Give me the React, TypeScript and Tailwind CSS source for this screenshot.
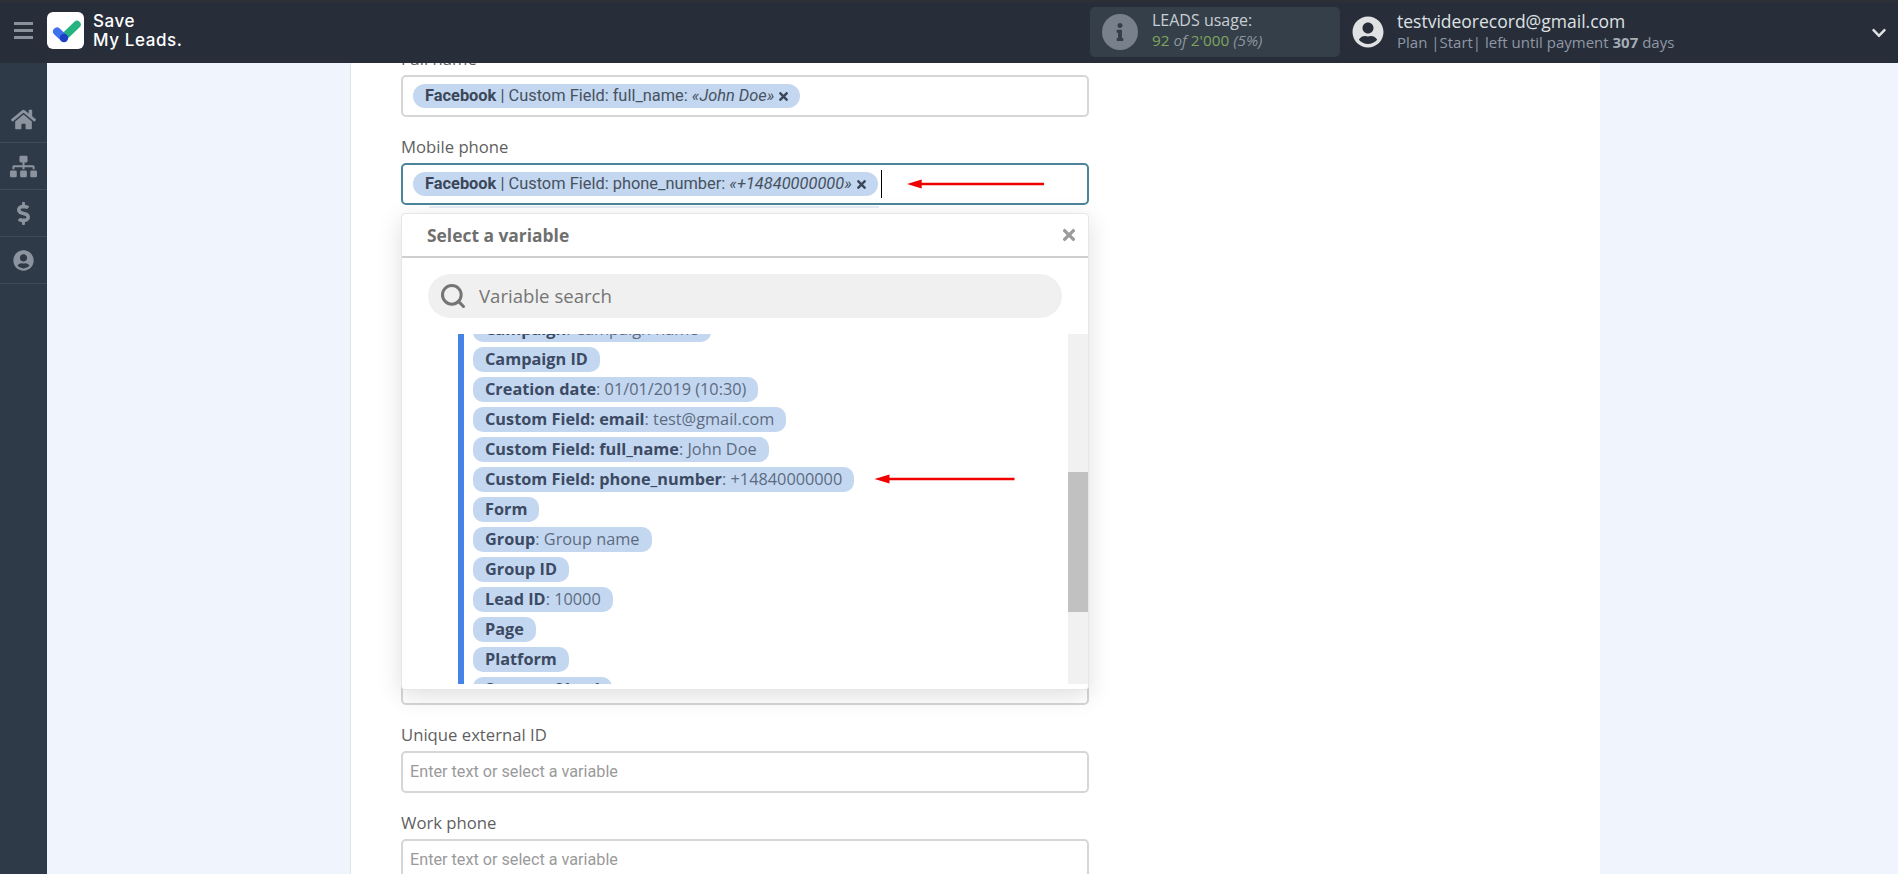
import React from "react";
import { FaHome, FaSitemap, FaDollarSign, FaUserCircle, FaInfo, FaTimes, FaChevronDown } from "react-icons/fa";
import { Search } from "lucide-react";

const openSans = "font-['Open_Sans','Liberation_Sans',sans-serif]";
const roboto = "font-['Roboto','Liberation_Sans',sans-serif]";

function TagChip({ field, value }: { field: string; value: string }) {
  return (
    <span className={`${roboto} inline-flex items-center h-[24px] rounded-[12px] bg-[#c3d7f0] pl-[12px] pr-[10px] text-[16.4px] text-[#47525f] whitespace-nowrap`}>
      <b className="font-bold text-[#3b4759]">Facebook</b>
      <span>&nbsp;| Custom Field: {field}:&nbsp;</span>
      <i>«{value}»</i>
      <FaTimes className="ml-[3px] w-[13px] h-[13px] text-[#3b4759]" />
    </span>
  );
}

function Label({ children }: { children: React.ReactNode }) {
  return <div className={`${openSans} h-[20px] leading-[20px] text-[16.7px] text-[#5f5f5f] mb-[6px]`}>{children}</div>;
}

function PlainInput() {
  return (
    <div className={`${roboto} h-[42px] border-2 border-[#d6d6d6] rounded-[5px] bg-white flex items-center pl-[7px] text-[16.2px] text-[#9a9a9a]`}>
      Enter text or select a variable
    </div>
  );
}

const vars: [string, string?][] = [
  ["Campaign", "Campaign name"],
  ["Campaign ID"],
  ["Creation date", "01/01/2019 (10:30)"],
  ["Custom Field: email", "test@gmail.com"],
  ["Custom Field: full_name", "John Doe"],
  ["Custom Field: phone_number", "+14840000000"],
  ["Form"],
  ["Group", "Group name"],
  ["Group ID"],
  ["Lead ID", "10000"],
  ["Page"],
  ["Platform"],
  ["Source of lead"],
];

function RedArrow({ className }: { className: string }) {
  return (
    <svg className={className} viewBox="0 0 140 10" fill="none">
      <path d="M14 5H140" stroke="#f00000" strokeWidth="2.6" />
      <path d="M0 5L15 0.5V9.5Z" fill="#f00000" />
    </svg>
  );
}

function Dropdown() {
  return (
    <div className="absolute left-0 right-0 top-[76px] h-[477px] z-10 bg-white rounded-[4px] border border-[#e6e6e6] shadow-[0_6px_24px_rgba(0,0,0,0.13)] flex flex-col">
      <div className="h-[44px] shrink-0 border-b-2 border-[#cfcfcf] flex items-center justify-between pl-[25px] pr-[10px]">
        <span className={`${openSans} text-[17.4px] font-bold text-[#6f6f6f]`}>Select a variable</span>
        <FaTimes className="w-[18px] h-[18px] text-[#9b9b9b]" />
      </div>
      <div className="px-[26px] pt-[16px] pb-[16px] shrink-0">
        <div className="h-[44px] rounded-full bg-[#f0f0f0] flex items-center pl-[11px]">
          <Search className="w-[28px] h-[28px] text-[#757575]" strokeWidth={2.6} />
          <span className={`${openSans} ml-[12px] text-[18.6px] text-[#757575]`}>Variable search</span>
        </div>
      </div>
      <div className="relative flex-1 min-h-0 mb-[5px] overflow-hidden">
        <div className="ml-[56px] w-[6px] h-full bg-[#4583e6] absolute left-0 top-0" />
        <div className="absolute right-0 top-0 bottom-0 w-[20px] bg-[#f1f1f1]">
          <div className="mt-[138px] h-[140px] bg-[#c1c1c1]" />
        </div>
        <div className="pl-[71px] -mt-[17px] flex flex-col items-start gap-[5px]">
          {vars.map(([k, v]) => (
            <div key={k} className={`${openSans} h-[25px] shrink-0 rounded-[10px] bg-[#c3d7f0] px-[12px] flex items-center text-[16.3px] text-[#5d6b80] whitespace-nowrap`}>
              <b className="font-bold text-[#3c4a63]">{k}</b>
              {v ? <span className="font-normal">: {v}</span> : null}
            </div>
          ))}
        </div>
      </div>
    </div>
  );
}

export default function App() {
  return (
    <div className="h-screen w-full overflow-hidden flex flex-col bg-white">
      <header className="h-[63px] shrink-0 bg-[#272e3a] border-t-2 border-[#2d3036] flex items-center text-white">
        <div className="w-[47px] flex flex-col items-center gap-[4px] -mt-[4px] shrink-0">
          <span className="block w-[19px] h-[3px] bg-[#8a919b]" />
          <span className="block w-[19px] h-[3px] bg-[#8a919b]" />
          <span className="block w-[19px] h-[3px] bg-[#8a919b]" />
        </div>
        <div className="w-[37px] h-[37px] -mt-[4px] rounded-[6px] bg-white shrink-0">
          <svg viewBox="0 0 37 37" className="w-full h-full" fill="none">
            <path d="M16.5 25.5L30 12.5" stroke="#25b37f" strokeWidth="7.5" strokeLinecap="round" />
            <path d="M10 19.5L16.5 25.5" stroke="#3f72ea" strokeWidth="8" strokeLinecap="round" />
            <circle cx="17" cy="26" r="4.2" fill="#1d3fc4" />
          </svg>
        </div>
        <div className="ml-[9px] -mt-[4px] font-['Inter',sans-serif] font-medium text-[17px] leading-[19px] tracking-[0.6px] shrink-0">
          <div>Save</div>
          <div>My Leads.</div>
        </div>
        <div className="ml-auto flex items-center h-full">
          <div className="w-[250px] h-[50px] -mt-[2px] rounded-[5px] bg-[#343f4a] flex items-center pl-[12px]">
            <div className="w-[36px] h-[36px] rounded-full bg-[#78818b] flex items-center justify-center">
              <FaInfo className="w-[18px] h-[18px] text-[#343f4a]" />
            </div>
            <div className={`${openSans} ml-[14px] -mt-[3px] leading-[20px]`}>
              <div className="text-[16px] text-[#c9ced3]">LEADS usage:</div>
              <div className="text-[15.3px] text-[#7fa55d]">
                92 <i className="text-[#8c959e]">of</i> 2'000 <i className="text-[#8c959e]">(5%)</i>
              </div>
            </div>
          </div>
          <FaUserCircle className="ml-[12px] w-[32px] h-[32px] -mt-[2px] text-[#dfe1e3]" />
          <div className={`${openSans} ml-[13px] w-[474px] -mt-[2px]`}>
            <div className="text-[17.5px] leading-[23px] text-[#dfe1e3] -mt-[1px]">testvideorecord@gmail.com</div>
            <div className="text-[15px] leading-[19px] text-[#8f98a3]">
              Plan |Start| left until payment <b className="font-bold text-[#a5adb5]">307</b> days
            </div>
          </div>
          <FaChevronDown className="w-[16px] h-[16px] text-[#dfe1e3] mr-[11px]" />
        </div>
      </header>
      <div className="flex flex-1 min-h-0">
        <aside className="w-[47px] shrink-0 bg-[#2f3a48] pt-[33px] text-[#8b949e]">
          <div className="h-[47px] border-b border-[#414c5a] flex items-center justify-center"><FaHome className="w-[25px] h-[25px]" /></div>
          <div className="h-[47px] border-b border-[#414c5a] flex items-center justify-center"><FaSitemap className="w-[27px] h-[27px]" /></div>
          <div className="h-[47px] border-b border-[#414c5a] flex items-center justify-center"><FaDollarSign className="w-[23px] h-[23px]" /></div>
          <div className="h-[47px] border-b border-[#414c5a] flex items-center justify-center"><FaUserCircle className="w-[21px] h-[21px]" /></div>
        </aside>
        <div className="w-[304px] shrink-0 bg-[#f0f4fc] border-r border-[#dfe3ea]" />
        <main className="w-[1249px] shrink-0 relative overflow-hidden bg-white">
          <div className="ml-[50px] w-[688px] -mt-[14px]">
            <Label>Full name</Label>
            <div className="h-[42px] border-2 border-[#d6d6d6] rounded-[5px] bg-white flex items-center pl-[10px]">
              <TagChip field="full_name" value="John Doe" />
            </div>
            <div className="mt-[20px] relative">
              <Label>Mobile phone</Label>
              <div className="relative h-[42px] border-2 border-[#4a8599] rounded-[5px] bg-white flex items-center pl-[10px]">
                <TagChip field="phone_number" value="+14840000000" />
                <span className="ml-[3px] w-px h-[28px] bg-black" />
                <RedArrow className="absolute left-[504px] top-[14px] w-[137px] h-[10px]" />
                <span className="absolute left-[26px] top-[41px] w-[450px] h-[2px] bg-[#e6edf7]" />
              </div>
              <Dropdown />
            </div>
            <div className="mt-[458px] h-[42px] border-2 border-[#d6d6d6] rounded-[5px] bg-white" />
            <div className="mt-[20px]">
              <Label>Unique external ID</Label>
              <PlainInput />
            </div>
            <div className="mt-[20px]">
              <Label>Work phone</Label>
              <PlainInput />
            </div>
          </div>
          <RedArrow className="absolute z-20 left-[523px] top-[411px] w-[141px] h-[10px]" />
        </main>
        <div className="flex-1 bg-[#f0f4fc]" />
      </div>
    </div>
  );
}
